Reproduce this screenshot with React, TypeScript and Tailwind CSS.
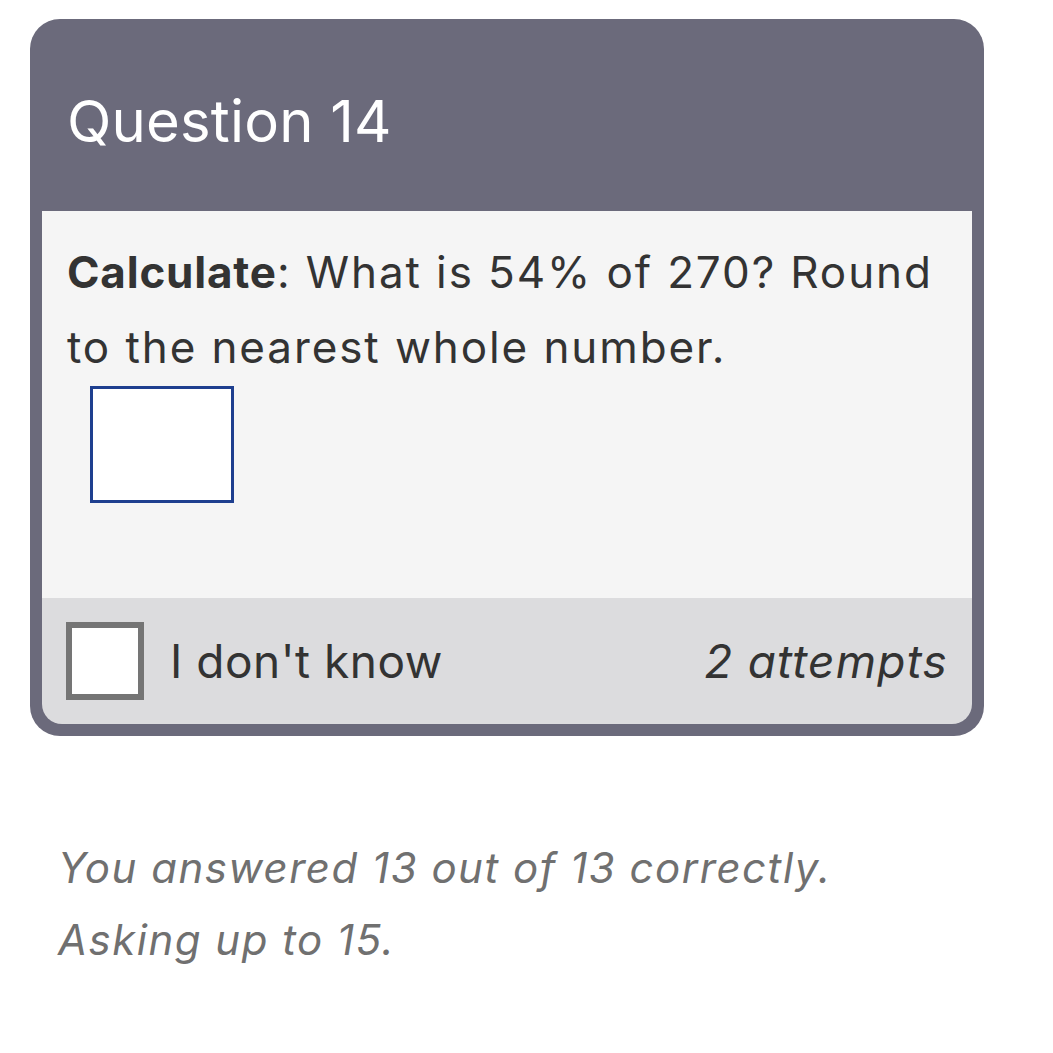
import React from "react";

export default function App() {
  return (
    <div className="min-h-[1053px] bg-white pt-[19px] pl-[30px] pr-[69px]" style={{ fontFamily: "Inter, 'Noto Sans', sans-serif" }}>
      <div className="w-[954px] rounded-[30px] bg-[#6b6a7b] px-[12px] pb-[12px]">
        <div className="h-[192px] flex items-center pl-[25px]">
          <h2 className="text-[58px] leading-none text-white font-normal tracking-[0.2px] mt-[12px]">Question 14</h2>
        </div>
        <div className="rounded-b-[20px] overflow-hidden">
          <div className="h-[387px] bg-[#f5f5f5] pl-[25px] pr-[30px] pt-[24px]">
            <p className="text-[44px] leading-[75px] text-[#333333] tracking-[1.9px]">
              <span className="font-bold tracking-[0.8px]">Calculate</span>: What is 54% of 270? Round to the nearest whole number.
            </p>
            <div className="ml-[23px] mt-[1px] w-[144px] h-[117px] border-[3px] border-[#1e3f8f] bg-white"></div>
          </div>
          <div className="h-[126px] bg-[#dcdcde] flex items-center justify-between pl-[24px] pr-[24px]">
            <div className="flex items-center gap-[26px]">
              <div className="w-[78px] h-[78px] border-[6px] border-[#757575] bg-white"></div>
              <span className="text-[46px] text-[#333333] tracking-[0.5px]">I don't know</span>
            </div>
            <span className="text-[46px] italic text-[#333333] tracking-[1.2px]">2 attempts</span>
          </div>
        </div>
      </div>
      <div className="pl-[28px] mt-[96px] text-[42px] leading-[72px] italic text-[#707070] tracking-[1.5px]">
        <p>You answered 13 out of 13 correctly.</p>
        <p>Asking up to 15.</p>
      </div>
    </div>
  );
}
